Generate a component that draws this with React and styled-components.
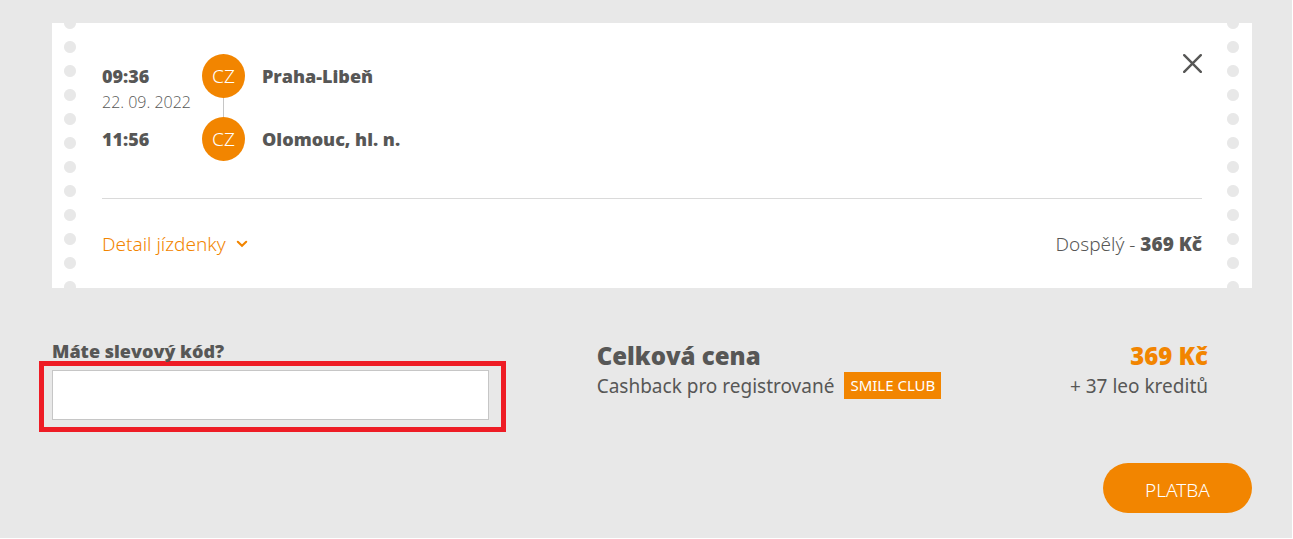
import React, { useState } from "react";
import styled, { createGlobalStyle } from "styled-components";

const stops = [
  { time: "09:36", date: "22. 09. 2022", country: "CZ", name: "Praha-Libeň" },
  { time: "11:56", country: "CZ", name: "Olomouc, hl. n." },
];

export default function App() {
  const [code, setCode] = useState("");

  return (
    <Page>
      <GlobalStyle />
      <Ticket>
        <Perforation />
        <TicketBody>
          <Trip>
            <Times>
              {stops.map((stop) => (
                <div key={stop.time}>
                  <Time>{stop.time}</Time>
                  {stop.date && <TripDate>{stop.date}</TripDate>}
                </div>
              ))}
            </Times>
            <Countries>
              {stops.map((stop) => (
                <Country key={stop.time}>{stop.country}</Country>
              ))}
            </Countries>
            <Stations>
              {stops.map((stop) => (
                <Station key={stop.name}>{stop.name}</Station>
              ))}
            </Stations>
            <CloseButton type="button" aria-label="Zavřít">
              <svg width="19" height="19" viewBox="0 0 19 19" fill="none">
                <path
                  d="M1.2 1.2L17.8 17.8M17.8 1.2L1.2 17.8"
                  stroke="#575756"
                  strokeWidth="2.4"
                  strokeLinecap="round"
                />
              </svg>
            </CloseButton>
          </Trip>
          <TicketFooter>
            <DetailButton type="button">
              Detail jízdenky
              <svg width="12" height="8" viewBox="0 0 12 8" fill="none">
                <path
                  d="M1.8 1.8L6 5.8L10.2 1.8"
                  stroke="currentColor"
                  strokeWidth="2.1"
                  strokeLinecap="round"
                />
              </svg>
            </DetailButton>
            <Fare>
              Dospělý - <strong>369 Kč</strong>
            </Fare>
          </TicketFooter>
        </TicketBody>
        <Perforation />
      </Ticket>

      <Summary>
        <div>
          <Label htmlFor="code">Máte slevový kód?</Label>
          <Highlight>
            <CodeInput
              id="code"
              type="text"
              value={code}
              onChange={(e) => setCode(e.target.value)}
            />
          </Highlight>
        </div>
        <Total>
          <TotalRow>
            <TotalTitle>Celková cena</TotalTitle>
            <Price>369 Kč</Price>
          </TotalRow>
          <TotalRow>
            <Cashback>
              Cashback pro registrované <Badge>SMILE CLUB</Badge>
            </Cashback>
            <span>+ 37 leo kreditů</span>
          </TotalRow>
        </Total>
      </Summary>

      <Actions>
        <PayButton type="button">PLATBA</PayButton>
      </Actions>
    </Page>
  );
}

const GlobalStyle = createGlobalStyle`
  * {
    box-sizing: border-box;
  }
  body {
    margin: 0;
    background: #e8e8e8;
    color: #575756;
    font-family: "Noto Sans", "Open Sans", sans-serif;
    font-size: 19px;
    font-weight: 300;
    line-height: 24px;
  }
  button,
  input {
    font: inherit;
    color: inherit;
  }
  button {
    border: none;
    padding: 0;
    background: none;
    cursor: pointer;
  }
  svg {
    display: block;
  }
`;

const Page = styled.main`
  min-height: 100vh;
  padding: 23px 40px 24px 52px;
  border: 0 solid #fff;
  border-width: 0 1px 1px 0;
`;

const Ticket = styled.section`
  display: flex;
  justify-content: space-between;
  padding: 0 13px 0 12px;
  background: #fff;
`;

/* punched holes down both sides of the ticket */
const Perforation = styled.div`
  flex: none;
  width: 12px;
  background: radial-gradient(circle, #e8e8e8 5.5px, transparent 6.5px) 0 -12px / 12px 24px repeat-y;
`;

const TicketBody = styled.div`
  flex: 1;
  padding: 31px 25px 32px 26px;
`;

const Trip = styled.div`
  display: flex;
  padding-bottom: 37px;
  border-bottom: 1px solid #dadada;
`;

const Times = styled.div`
  display: flex;
  flex-direction: column;
  justify-content: space-between;
  width: 100px;
  padding: 10px 0;
`;

const Time = styled.div`
  font-family: "Open Sans", sans-serif;
  font-size: 18px;
  font-weight: 800;
`;

const TripDate = styled.div`
  font-family: "Open Sans", sans-serif;
  font-size: 16px;
  line-height: 28px;
`;

const Countries = styled.div`
  display: flex;
  flex-direction: column;
  justify-content: space-between;
  height: 107px;
  background: linear-gradient(#c6c6c6, #c6c6c6) 21px 0 / 1px 100% no-repeat;
`;

const Country = styled.span`
  width: 43px;
  height: 44px;
  border-radius: 50%;
  background: #f28500;
  color: #fff;
  line-height: 44px;
  text-align: center;
`;

const Stations = styled.div`
  display: flex;
  flex: 1;
  flex-direction: column;
  justify-content: space-between;
  padding: 10px 17px;
`;

const Station = styled.div`
  font-family: "Open Sans", sans-serif;
  font-size: 18px;
  font-weight: 800;
`;

const CloseButton = styled.button`
  align-self: flex-start;
`;

const TicketFooter = styled.div`
  display: flex;
  align-items: center;
  justify-content: space-between;
  padding-top: 33px;
`;

const DetailButton = styled.button`
  display: flex;
  align-items: center;
  gap: 10px;
  color: #f28500;
`;

const Fare = styled.div`
  strong {
    font-family: "Open Sans", sans-serif;
    font-weight: 800;
  }
`;

const Summary = styled.section`
  display: grid;
  grid-template-columns: 5fr 7fr;
  gap: 108px;
  padding: 51px 44px 0 0;
`;

const Label = styled.label`
  display: block;
  height: 22px;
  font-family: "Open Sans", sans-serif;
  font-size: 18px;
  font-weight: 800;
`;

/* frame drawn around the discount code box */
const Highlight = styled.div`
  margin: 0 -17px 0 -13px;
  padding: 4px 12px 7px 8px;
  border: 5px solid #ee1c25;
`;

const CodeInput = styled.input`
  display: block;
  width: 100%;
  height: 50px;
  padding: 0 16px;
  border: 1px solid #c6c6c6;
  border-radius: 0;
  background: #fff;
`;

const Total = styled.div`
  padding-top: 1px;
  font-weight: 400;
`;

const TotalRow = styled.div`
  display: flex;
  align-items: center;
  justify-content: space-between;
`;

const TotalTitle = styled.h2`
  margin: 0;
  font-family: "Open Sans", sans-serif;
  font-size: 24px;
  font-weight: 800;
  line-height: 32px;
`;

const Price = styled.strong`
  color: #f28500;
  font-family: "Open Sans", sans-serif;
  font-size: 24px;
  font-weight: 800;
  line-height: 32px;
`;

const Cashback = styled.div`
  display: flex;
  align-items: center;
  gap: 10px;
`;

const Badge = styled.span`
  padding: 0 6px;
  background: #f28500;
  color: #fff;
  font-size: 15px;
  line-height: 27px;
`;

const Actions = styled.div`
  display: flex;
  justify-content: flex-end;
  padding-top: 31px;
`;

const PayButton = styled.button`
  min-width: 149px;
  height: 50px;
  padding: 4px 32px 0;
  border-radius: 25px;
  background: #f28500;
  color: #fff;
`;
